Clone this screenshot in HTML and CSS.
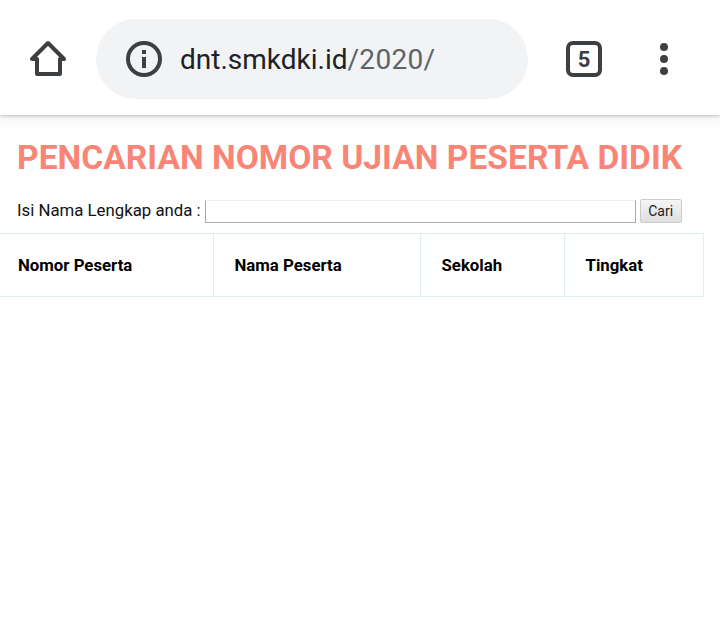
FILE: index.html
```html
<!DOCTYPE html>
<html lang="en">
<head>
  <meta charset="UTF-8" />
  <title>Pencarian Nomor Ujian</title>
  <meta name="viewport" content="width=device-width, initial-scale=1.0" />
  <link rel="stylesheet" href="styles.css">
</head>
<body>
  <header class="toolbar">
    <svg class="home-icon" width="38" height="38" viewBox="0 0 38 38" fill="none" stroke="#3c4043" stroke-width="4" stroke-linejoin="round" stroke-linecap="round">
      <path d="M3 19 19 3l16 16h-4v15H8V19z"/>
    </svg>
    <div class="omnibox">
      <svg class="info-icon" width="36" height="36" viewBox="0 0 36 36">
        <circle cx="18" cy="18" r="16" fill="none" stroke="#3c4043" stroke-width="4"/>
        <rect x="16" y="9" width="4" height="4" fill="#3c4043"/>
        <rect x="16" y="16" width="4" height="11" fill="#3c4043"/>
      </svg>
      <span class="url">dnt.smkdki.id<span class="url-path">/2020/</span></span>
    </div>
    <div class="tab-count">5</div>
    <div class="menu-dots"><i></i><i></i><i></i></div>
  </header>

  <main>
    <h1>PENCARIAN NOMOR UJIAN PESERTA DIDIK</h1>
    <form class="search-form">
      <label for="nama">Isi Nama Lengkap anda :</label>
      <input type="text" id="nama">
      <button type="button">Cari</button>
    </form>
    <table class="result-table">
      <tr>
        <th class="col-nomor">Nomor Peserta</th>
        <th class="col-nama">Nama Peserta</th>
        <th class="col-sekolah">Sekolah</th>
        <th class="col-tingkat">Tingkat</th>
      </tr>
    </table>
  </main>
</body>
</html>
```

FILE: styles.css
```css
html, body {
  margin: 0;
  padding: 0;
  background: white;
  overflow: hidden;
}

body {
  font-family: Roboto, sans-serif;
  color: #111;
}

.toolbar {
  height: 115px;
  display: flex;
  align-items: center;
  padding-left: 29px;
  padding-top: 3px;
  box-sizing: border-box;
  background: white;
  box-shadow: 0 1px 3px rgba(0, 0, 0, 0.22), 0 4px 14px rgba(0, 0, 0, 0.07);
}

.home-icon {
  margin-right: 29px;
}

.omnibox {
  width: 432px;
  height: 80px;
  border-radius: 40px;
  background: #f1f3f4;
  display: flex;
  align-items: center;
  padding-left: 30px;
  box-sizing: border-box;
}

.info-icon {
  margin-right: 18px;
}

.url {
  font-size: 28px;
  color: #202124;
}

.url-path {
  color: #5f6368;
  letter-spacing: 0.3px;
}

.tab-count {
  width: 36px;
  height: 36px;
  margin-left: 38px;
  border: 4px solid #3c4043;
  border-radius: 7px;
  box-sizing: border-box;
  display: flex;
  align-items: center;
  justify-content: center;
  font-size: 22px;
  font-weight: 700;
  color: #3c4043;
}

.menu-dots {
  margin-left: 58px;
  display: flex;
  flex-direction: column;
  gap: 4px;
}

.menu-dots i {
  display: block;
  width: 8px;
  height: 8px;
  border-radius: 50%;
  background: #3c4043;
}

h1 {
  margin: 0;
  padding: 23px 0 0 17px;
  font-size: 33.6px;
  line-height: 40px;
  font-weight: 700;
  color: #f98577;
  white-space: nowrap;
}

.search-form {
  display: flex;
  align-items: center;
  height: 24px;
  margin: 21px 0 0 17px;
  font-size: 16.8px;
}

.search-form label {
  margin-bottom: 2px;
}

.search-form input {
  width: 431px;
  height: 23px;
  margin-left: 4px;
  padding: 0;
  box-sizing: border-box;
  border: 1px solid #a9a9a9;
  border-top-color: #eeeeee;
  background: white;
}

.search-form button {
  width: 42px;
  height: 24px;
  margin-left: 4px;
  padding: 0;
  font-family: Roboto, sans-serif;
  font-size: 14px;
  color: #222;
  border: 1px solid #ccc;
  border-radius: 2px;
  background: linear-gradient(to bottom, #f6f6f6, #dedede);
}

.result-table {
  margin-top: 10px;
  width: 704px;
  table-layout: fixed;
  border-collapse: collapse;
  border: 1px solid #e0efed;
  border-left: none;
}

.result-table th {
  height: 63px;
  padding: 0 0 0 21px;
  box-sizing: border-box;
  border-left: 1px solid #e0efed;
  text-align: left;
  font-size: 16.8px;
  font-weight: 700;
  color: black;
}

.result-table th.col-nomor {
  width: 213px;
  border-left: none;
  padding-left: 18px;
}

.col-nama {
  width: 207px;
}

.col-sekolah {
  width: 144px;
}
```
